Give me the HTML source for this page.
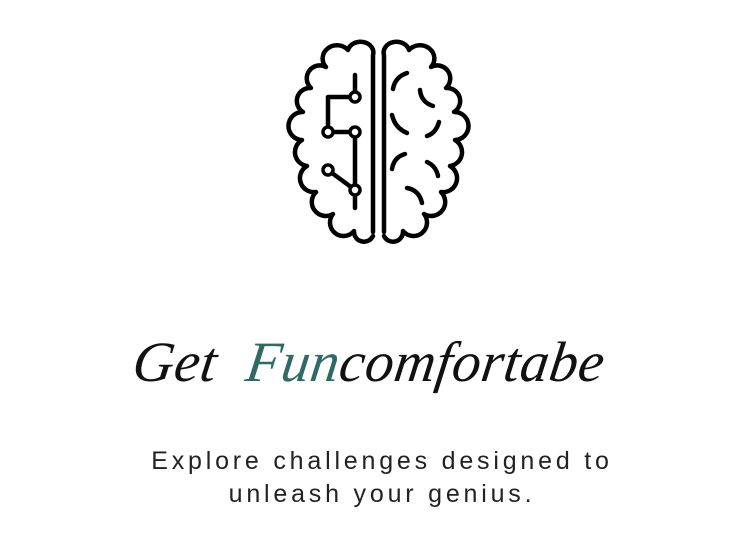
<!DOCTYPE html>
<html><head><meta charset="utf-8"><style>
html,body{margin:0;padding:0;background:#fff;width:750px;height:550px;overflow:hidden;position:relative}
svg.b{position:absolute;left:0;top:0}
.t{position:absolute;left:0;width:738px;text-align:center;top:330px;font-family:"Liberation Serif",serif;font-style:italic;font-size:57px;color:#111;letter-spacing:0.5px;transform:skewX(-8deg)}
.t span{color:#2f6a66}
.s{position:absolute;left:0;width:764px;text-align:center;font-family:"Liberation Sans",sans-serif;font-size:25px;letter-spacing:3.8px;color:#222;line-height:33px;top:445px}
</style></head><body>
<svg class="b" width="750" height="550" viewBox="0 0 750 550" fill="none" stroke="#000" stroke-width="4.5" stroke-linecap="round" stroke-linejoin="round">
<path d="M373,232 V55 A12,10 0 0 0 348,50 A13,12 0 0 0 326,67 A13,13 0 0 0 311,88 A13,13 0 0 0 303,112 A14,14 0 0 0 302,140 A14,14 0 0 0 307,166 A14,14 0 0 0 316,192 A14,14 0 0 0 333,214 A13,13 0 0 0 354,231 A10,10 0 0 0 373,236"/>
<g transform="translate(757,0) scale(-1,1)">
<path d="M373,232 V55 A12,10 0 0 0 348,50 A13,12 0 0 0 326,67 A13,13 0 0 0 311,88 A13,13 0 0 0 303,112 A14,14 0 0 0 302,140 A14,14 0 0 0 307,166 A14,14 0 0 0 316,192 A14,14 0 0 0 333,214 A13,13 0 0 0 354,231 A10,10 0 0 0 373,236"/>
</g>
<path d="M355,75 V92 M350,97 H328 V127 M333,132 H350 M355,137 V208 M332,173 L351,187"/>
<g fill="#fff" stroke-width="3.5"><circle cx="355" cy="97" r="5"/><circle cx="328" cy="132" r="5"/><circle cx="355" cy="132" r="5"/><circle cx="328" cy="170" r="5"/><circle cx="355" cy="190" r="5"/></g>
<path d="M393,89 Q395,77 407,73"/>
<path d="M420,90 Q421,102 433,106"/>
<path d="M392,115 Q395,128 407,133"/>
<path d="M427,136 Q436,133 439,122"/>
<path d="M392,169 Q394,157 405,154"/>
<path d="M427,162 Q436,166 438,176"/>
<path d="M407,188 Q419,190 422,203"/>
</svg>
<div class="t">Get &nbsp;<span>Fun</span>comfortabe</div>
<div class="s">Explore challenges designed to<br>unleash your genius.</div>
</body></html>
